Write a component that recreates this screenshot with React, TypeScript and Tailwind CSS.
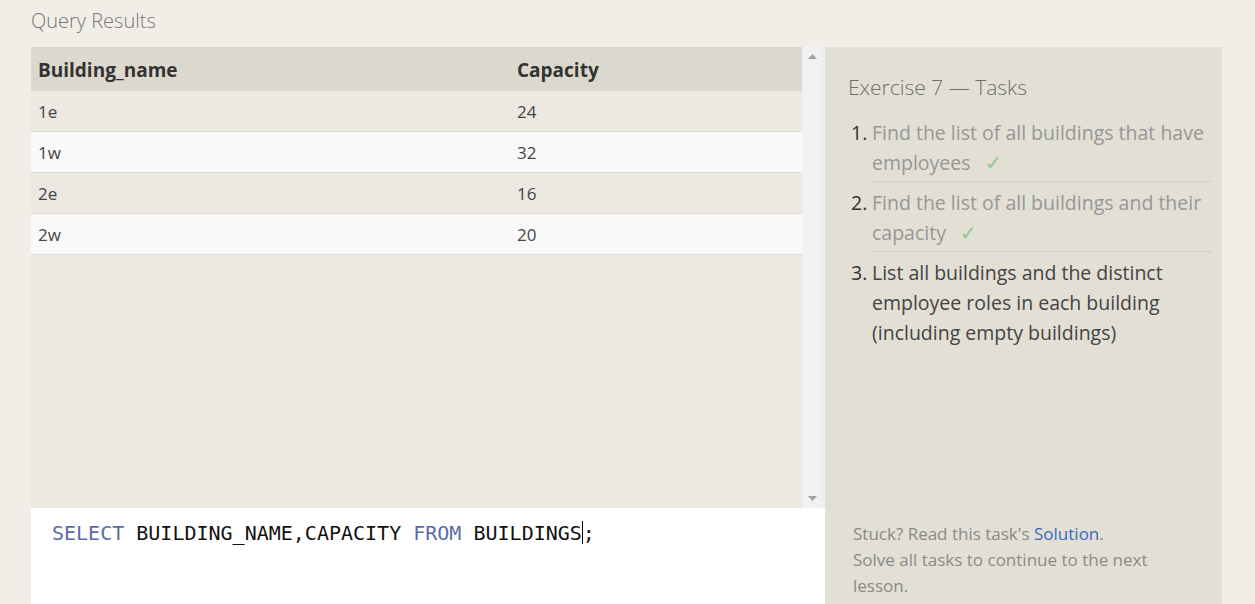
import React from 'react';

const rows = [
  { name: '1e', capacity: 24 },
  { name: '1w', capacity: 32 },
  { name: '2e', capacity: 16 },
  { name: '2w', capacity: 20 },
];

const tasks = [
  { text: 'Find the list of all buildings that have employees', done: true },
  { text: 'Find the list of all buildings and their capacity', done: true },
  { text: 'List all buildings and the distinct employee roles in each building (including empty buildings)', done: false },
];

function ResultsTable() {
  return (
    <div className="flex h-[461px] bg-[#ebe9e1]">
      <div className="flex-1">
        <div className="flex h-[44px] items-center bg-[#dbd9cd] pt-[3px] text-[19px] font-bold text-[#333]">
          <div className="w-[486px] pl-[7px]">Building_name</div>
          <div>Capacity</div>
        </div>
        {rows.map((r, i) => (
          <div
            key={r.name}
            className={`flex h-[41px] items-center border-b border-[#dedcd4] pt-[2px] text-[17px] text-[#444] ${
              i % 2 === 0 ? 'bg-[#ebe9e1]' : 'bg-[#f9f9f9]'
            }`}
          >
            <div className="w-[486px] pl-[7px]">{r.name}</div>
            <div>{r.capacity}</div>
          </div>
        ))}
      </div>
      <div className="flex w-[20px] flex-col items-center justify-between bg-[#f1f1f1] py-[7px]">
        <svg width="9" height="5" viewBox="0 0 9 5">
          <path d="M0 5 L4.5 0 L9 5 Z" fill="#a3a3a3" />
        </svg>
        <svg width="9" height="5" viewBox="0 0 9 5">
          <path d="M0 0 L9 0 L4.5 5 Z" fill="#a3a3a3" />
        </svg>
      </div>
    </div>
  );
}

function Editor() {
  return (
    <div className="h-[96px] bg-white pl-[21px] pt-[9px] font-['DejaVu_Sans_Mono',monospace] text-[20px] text-[#111]">
      <span className="text-[#5c6ba8]">SELECT</span> BUILDING_NAME,CAPACITY{' '}
      <span className="text-[#5c6ba8]">FROM</span> BUILDINGS
      <span className="inline-block h-[23px] w-[1px] translate-y-[4px] bg-black" />;
    </div>
  );
}

function TaskPanel() {
  return (
    <div className="flex h-[557px] w-[397px] flex-col justify-between bg-[#e2dfd4] pb-[5px]">
      <div className="pl-[23px] pr-[10px] pt-[25px]">
        <h2 className="text-[21px] font-light text-[#6f6f6f]">Exercise 7 — Tasks</h2>
        <ol className="mt-[8px]">
          {tasks.map((t, i) => (
            <li key={i} className="flex pt-[6px] text-[19.5px] leading-[30px]">
              <span className="w-[24px] pl-[3px] text-[#333]">{i + 1}.</span>
              <div
                className={`flex-1 pb-[3px] ${
                  i < tasks.length - 1 ? 'border-b border-[#d3d0c5]' : ''
                } ${t.done ? 'text-[#979797]' : 'text-[#444]'}`}
              >
                {t.text}
                {t.done && <span className="ml-[14px] text-[#8fc98f]">✓</span>}
              </div>
            </li>
          ))}
        </ol>
      </div>
      <div className="pl-[28px] pr-[60px] text-[17px] leading-[26px] text-[#8a8a8a]">
        Stuck? Read this task's <span className="text-[#3a67c4]">Solution</span>.
        <br />
        Solve all tasks to continue to the next lesson.
      </div>
    </div>
  );
}

export default function App() {
  return (
    <div className="h-[604px] w-[1255px] overflow-hidden bg-[#f1eee7] pl-[31px] font-['Open_Sans',sans-serif]">
      <div className="pt-[7px] text-[20px] font-light leading-[28px] text-[#777]">Query Results</div>
      <div className="mt-[12px] flex">
        <div className="w-[794px]">
          <div className="flex">
            <div className="w-[791px]">
              <ResultsTable />
            </div>
            <div className="w-[3px] bg-[#f1eee7]" />
          </div>
          <Editor />
        </div>
        <TaskPanel />
      </div>
    </div>
  );
}
